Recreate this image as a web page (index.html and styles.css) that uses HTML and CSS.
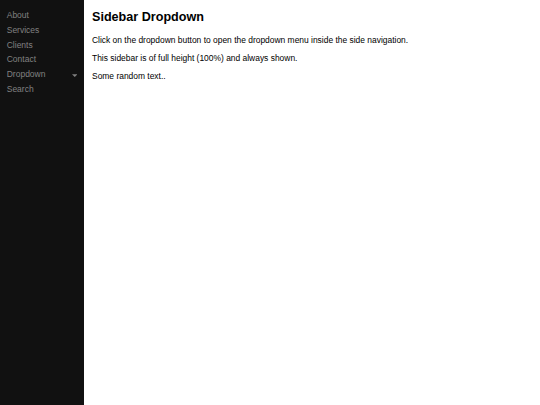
FILE: index.html
```html
<!DOCTYPE html>
<html>
<head>
<meta charset="utf-8">
<link rel="stylesheet" href="styles.css">
</head>
<body>
<nav class="sidenav">
  <a class="nav-link" href="#about">About</a>
  <a class="nav-link" href="#services">Services</a>
  <a class="nav-link" href="#clients">Clients</a>
  <a class="nav-link" href="#contact">Contact</a>
  <button class="dropdown-btn">Dropdown
    <svg class="caret" viewBox="0 0 10 5" width="5.5" height="3"><path d="M0 0h10L5 5z" fill="#818181"/></svg>
  </button>
  <a class="nav-link" href="#search">Search</a>
</nav>
<main class="main">
  <h2 class="title">Sidebar Dropdown</h2>
  <p class="text">Click on the dropdown button to open the dropdown menu inside the side navigation.</p>
  <p class="text">This sidebar is of full height (100%) and always shown.</p>
  <p class="text">Some random text..</p>
</main>
</body>
</html>
```
FILE: styles.css
```css
html, body {
  height: 100%;
}
body {
  margin: 0;
  font-family: "Liberation Sans", Arial, sans-serif;
  background: #fff;
  color: #000;
}
.sidenav {
  position: fixed;
  top: 0;
  left: 0;
  width: 84px;
  height: 100%;
  background: #111;
  padding-top: 8.6px;
  box-sizing: border-box;
  overflow-x: hidden;
}
.nav-link,
.dropdown-btn {
  display: block;
  margin: 0;
  padding: 2.5px 3.36px 2.5px 6.72px;
  font-family: "Liberation Sans", Arial, sans-serif;
  font-size: 8.5px;
  line-height: 9.8px;
  height: 14.8px;
  box-sizing: border-box;
  color: #818181;
  text-decoration: none;
}
.dropdown-btn {
  display: flex;
  align-items: center;
  justify-content: space-between;
  width: 100%;
  border: none;
  background: none;
  text-align: left;
  cursor: pointer;
  outline: none;
}
.caret {
  margin-right: 3.6px;
  display: block;
}
.main {
  margin-left: 84px;
  font-size: 8.45px;
  padding: 1px 8px 0;
}
.title {
  font-size: 12.6px;
  line-height: 14.5px;
  font-weight: bold;
  margin: 9px 0 11px;
}
.text {
  line-height: 9.8px;
  margin: 8.4px 0;
}
```
